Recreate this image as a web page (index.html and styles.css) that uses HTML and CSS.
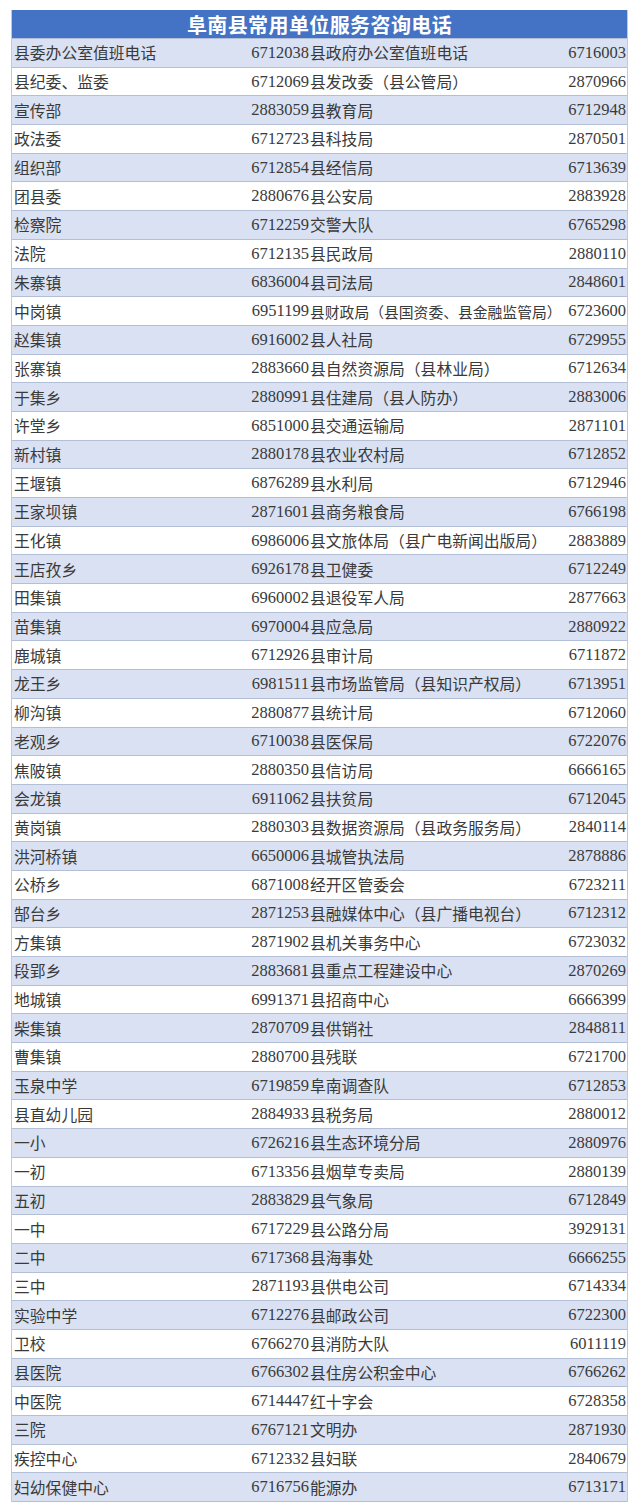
FILE: index.html
```html
<!DOCTYPE html>
<html lang="zh">
<head>
<meta charset="utf-8">
<title>阜南县常用单位服务咨询电话</title>
<link rel="stylesheet" href="styles.css">
</head>
<body>
<div class="table">
  <div class="title">阜南县常用单位服务咨询电话</div>
  <div class="row"><span class="name">县委办公室值班电话</span><span class="num">6712038</span><span class="name2">县政府办公室值班电话</span><span class="num">6716003</span></div>
  <div class="row"><span class="name">县纪委、监委</span><span class="num">6712069</span><span class="name2">县发改委（县公管局）</span><span class="num">2870966</span></div>
  <div class="row"><span class="name">宣传部</span><span class="num">2883059</span><span class="name2">县教育局</span><span class="num">6712948</span></div>
  <div class="row"><span class="name">政法委</span><span class="num">6712723</span><span class="name2">县科技局</span><span class="num">2870501</span></div>
  <div class="row"><span class="name">组织部</span><span class="num">6712854</span><span class="name2">县经信局</span><span class="num">6713639</span></div>
  <div class="row"><span class="name">团县委</span><span class="num">2880676</span><span class="name2">县公安局</span><span class="num">2883928</span></div>
  <div class="row"><span class="name">检察院</span><span class="num">6712259</span><span class="name2">交警大队</span><span class="num">6765298</span></div>
  <div class="row"><span class="name">法院</span><span class="num">6712135</span><span class="name2">县民政局</span><span class="num">2880110</span></div>
  <div class="row"><span class="name">朱寨镇</span><span class="num">6836004</span><span class="name2">县司法局</span><span class="num">2848601</span></div>
  <div class="row"><span class="name">中岗镇</span><span class="num">6951199</span><span class="name2 tight">县财政局（县国资委、县金融监管局）</span><span class="num">6723600</span></div>
  <div class="row"><span class="name">赵集镇</span><span class="num">6916002</span><span class="name2">县人社局</span><span class="num">6729955</span></div>
  <div class="row"><span class="name">张寨镇</span><span class="num">2883660</span><span class="name2">县自然资源局（县林业局）</span><span class="num">6712634</span></div>
  <div class="row"><span class="name">于集乡</span><span class="num">2880991</span><span class="name2">县住建局（县人防办）</span><span class="num">2883006</span></div>
  <div class="row"><span class="name">许堂乡</span><span class="num">6851000</span><span class="name2">县交通运输局</span><span class="num">2871101</span></div>
  <div class="row"><span class="name">新村镇</span><span class="num">2880178</span><span class="name2">县农业农村局</span><span class="num">6712852</span></div>
  <div class="row"><span class="name">王堰镇</span><span class="num">6876289</span><span class="name2">县水利局</span><span class="num">6712946</span></div>
  <div class="row"><span class="name">王家坝镇</span><span class="num">2871601</span><span class="name2">县商务粮食局</span><span class="num">6766198</span></div>
  <div class="row"><span class="name">王化镇</span><span class="num">6986006</span><span class="name2">县文旅体局（县广电新闻出版局）</span><span class="num">2883889</span></div>
  <div class="row"><span class="name">王店孜乡</span><span class="num">6926178</span><span class="name2">县卫健委</span><span class="num">6712249</span></div>
  <div class="row"><span class="name">田集镇</span><span class="num">6960002</span><span class="name2">县退役军人局</span><span class="num">2877663</span></div>
  <div class="row"><span class="name">苗集镇</span><span class="num">6970004</span><span class="name2">县应急局</span><span class="num">2880922</span></div>
  <div class="row"><span class="name">鹿城镇</span><span class="num">6712926</span><span class="name2">县审计局</span><span class="num">6711872</span></div>
  <div class="row"><span class="name">龙王乡</span><span class="num">6981511</span><span class="name2">县市场监管局（县知识产权局）</span><span class="num">6713951</span></div>
  <div class="row"><span class="name">柳沟镇</span><span class="num">2880877</span><span class="name2">县统计局</span><span class="num">6712060</span></div>
  <div class="row"><span class="name">老观乡</span><span class="num">6710038</span><span class="name2">县医保局</span><span class="num">6722076</span></div>
  <div class="row"><span class="name">焦陂镇</span><span class="num">2880350</span><span class="name2">县信访局</span><span class="num">6666165</span></div>
  <div class="row"><span class="name">会龙镇</span><span class="num">6911062</span><span class="name2">县扶贫局</span><span class="num">6712045</span></div>
  <div class="row"><span class="name">黄岗镇</span><span class="num">2880303</span><span class="name2">县数据资源局（县政务服务局）</span><span class="num">2840114</span></div>
  <div class="row"><span class="name">洪河桥镇</span><span class="num">6650006</span><span class="name2">县城管执法局</span><span class="num">2878886</span></div>
  <div class="row"><span class="name">公桥乡</span><span class="num">6871008</span><span class="name2">经开区管委会</span><span class="num">6723211</span></div>
  <div class="row"><span class="name">郜台乡</span><span class="num">2871253</span><span class="name2">县融媒体中心（县广播电视台）</span><span class="num">6712312</span></div>
  <div class="row"><span class="name">方集镇</span><span class="num">2871902</span><span class="name2">县机关事务中心</span><span class="num">6723032</span></div>
  <div class="row"><span class="name">段郢乡</span><span class="num">2883681</span><span class="name2">县重点工程建设中心</span><span class="num">2870269</span></div>
  <div class="row"><span class="name">地城镇</span><span class="num">6991371</span><span class="name2">县招商中心</span><span class="num">6666399</span></div>
  <div class="row"><span class="name">柴集镇</span><span class="num">2870709</span><span class="name2">县供销社</span><span class="num">2848811</span></div>
  <div class="row"><span class="name">曹集镇</span><span class="num">2880700</span><span class="name2">县残联</span><span class="num">6721700</span></div>
  <div class="row"><span class="name">玉泉中学</span><span class="num">6719859</span><span class="name2">阜南调查队</span><span class="num">6712853</span></div>
  <div class="row"><span class="name">县直幼儿园</span><span class="num">2884933</span><span class="name2">县税务局</span><span class="num">2880012</span></div>
  <div class="row"><span class="name">一小</span><span class="num">6726216</span><span class="name2">县生态环境分局</span><span class="num">2880976</span></div>
  <div class="row"><span class="name">一初</span><span class="num">6713356</span><span class="name2">县烟草专卖局</span><span class="num">2880139</span></div>
  <div class="row"><span class="name">五初</span><span class="num">2883829</span><span class="name2">县气象局</span><span class="num">6712849</span></div>
  <div class="row"><span class="name">一中</span><span class="num">6717229</span><span class="name2">县公路分局</span><span class="num">3929131</span></div>
  <div class="row"><span class="name">二中</span><span class="num">6717368</span><span class="name2">县海事处</span><span class="num">6666255</span></div>
  <div class="row"><span class="name">三中</span><span class="num">2871193</span><span class="name2">县供电公司</span><span class="num">6714334</span></div>
  <div class="row"><span class="name">实验中学</span><span class="num">6712276</span><span class="name2">县邮政公司</span><span class="num">6722300</span></div>
  <div class="row"><span class="name">卫校</span><span class="num">6766270</span><span class="name2">县消防大队</span><span class="num">6011119</span></div>
  <div class="row"><span class="name">县医院</span><span class="num">6766302</span><span class="name2">县住房公积金中心</span><span class="num">6766262</span></div>
  <div class="row"><span class="name">中医院</span><span class="num">6714447</span><span class="name2">红十字会</span><span class="num">6728358</span></div>
  <div class="row"><span class="name">三院</span><span class="num">6767121</span><span class="name2">文明办</span><span class="num">2871930</span></div>
  <div class="row"><span class="name">疾控中心</span><span class="num">6712332</span><span class="name2">县妇联</span><span class="num">2840679</span></div>
  <div class="row"><span class="name">妇幼保健中心</span><span class="num">6716756</span><span class="name2">能源办</span><span class="num">6713171</span></div>
</div>
</body>
</html>
```

FILE: styles.css
```css
html, body {
  margin: 0;
  padding: 0;
  background: #ffffff;
}

body {
  font-family: "Liberation Serif", "Noto Sans CJK SC", serif;
  color: #333333;
}

.table {
  width: 617px;
  margin: 10px 0 0 11px;
  box-sizing: border-box;
  border-left: 1px solid #c3cad6;
  border-right: 1px solid #c3cad6;
}

.title {
  height: 29px;
  background: #4472c4;
  color: #ffffff;
  font-family: "Noto Sans CJK SC", sans-serif;
  font-weight: 700;
  font-size: 20px;
  line-height: 29px;
  text-align: center;
  letter-spacing: 0.4px;
  border-bottom: 1px solid #b3bfd6;
  box-sizing: border-box;
}

.row {
  display: grid;
  grid-template-columns: 233px 62px 1fr 60px;
  align-items: center;
  height: 28.7px;
  padding: 0 1px 0 2px;
  box-sizing: border-box;
  border-bottom: 1px solid #b3bfd6;
  background: #ffffff;
  white-space: nowrap;
}

.row:nth-child(even) {
  background: #d9e1f2;
}

.name,
.name2 {
  font-family: "Noto Sans CJK SC", sans-serif;
  font-size: 15.8px;
  color: #3a3a3a;
  overflow: visible;
}

.name2 {
  padding-left: 1px;
}

.name2.tight {
  font-size: 14.8px;
}

.num {
  font-family: "Liberation Serif", serif;
  font-size: 16.5px;
  text-align: right;
  color: #3a3a3a;
}
```
